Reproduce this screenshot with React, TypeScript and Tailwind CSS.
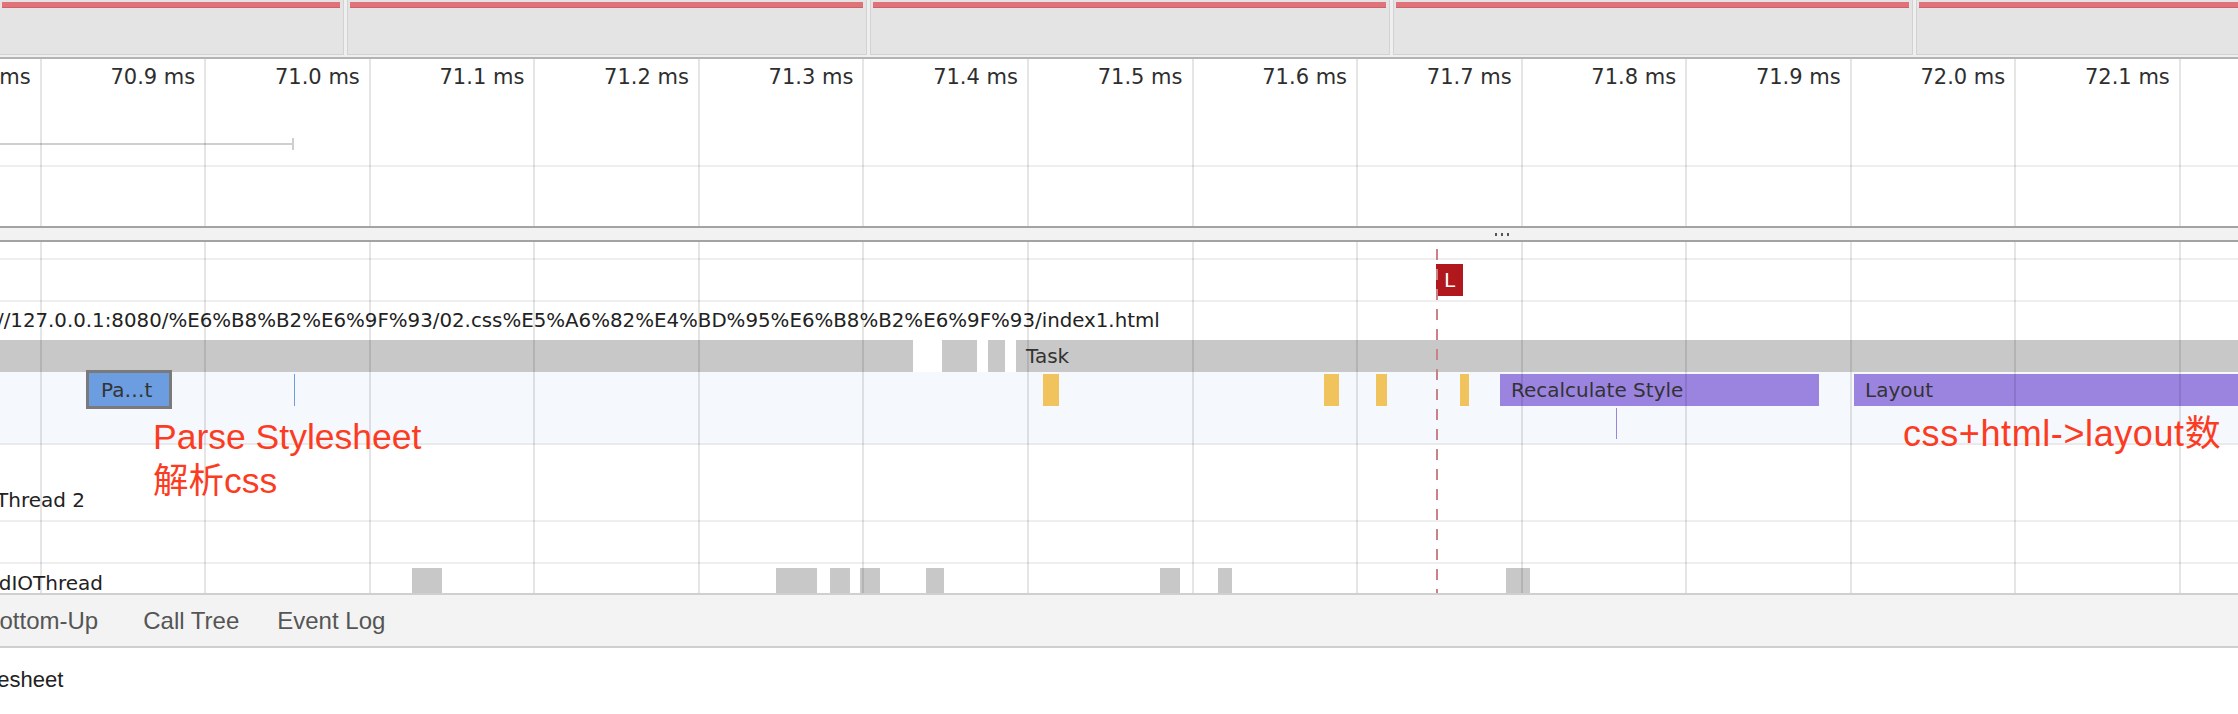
import React from "react";

const CELL_COUNT = 15;
const labels = [
  "70.8 ms", "70.9 ms", "71.0 ms", "71.1 ms", "71.2 ms", "71.3 ms", "71.4 ms", "71.5 ms",
  "71.6 ms", "71.7 ms", "71.8 ms", "71.9 ms", "72.0 ms", "72.1 ms", "72.2 ms",
];

function GridOverlay() {
  return (
    <div className="absolute top-0 bottom-0 left-[-122.85px] flex pointer-events-none">
      {Array.from({ length: CELL_COUNT }).map((_, i) => (
        <div key={i} className="w-[164.55px] shrink-0 h-full border-r-2 border-black/10" />
      ))}
    </div>
  );
}

function Segment({ w, first }: { w: string; first?: boolean }) {
  return (
    <div
      className={`${w} shrink-0 h-[55px] bg-[#e4e4e4] border-b border-r border-[#d2d2d2] ${
        first ? "" : "border-l"
      } pt-[2px] pl-[2px] pr-[3px]`}
    >
      <div className="h-[6px] bg-[#df7379] border-b border-[#d06168]" />
    </div>
  );
}

const ioBlocks = [
  [412, 442], [776, 817], [830, 850], [860, 880], [926, 944], [1160, 1180], [1218, 1232], [1506, 1530],
];
const yellow = [
  [1043, 1059], [1324, 1339], [1376, 1387], [1460, 1469],
];

export default function App() {
  return (
    <div className="relative w-[2238px] h-[714px] overflow-hidden bg-white font-['DejaVu_Sans',sans-serif] text-[#2a2a2a]">
      {/* Overview */}
      <div className="h-[57px] flex gap-[3px] bg-[#efefef] overflow-hidden">
        <Segment w="w-[344px]" first />
        <Segment w="w-[520px]" />
        <Segment w="w-[520px]" />
        <Segment w="w-[520px]" />
        <Segment w="w-[400px]" />
      </div>
      <div className="h-[2px] bg-[#b3b3b3]" />

      {/* Top timeline area */}
      <div className="relative h-[167px] overflow-hidden">
        <GridOverlay />
        <div className="relative h-[36px] flex ml-[-122.85px]">
          {labels.map((l) => (
            <div
              key={l}
              className="w-[164.55px] shrink-0 flex items-center justify-end pr-[11px] text-[21px] leading-[24px] text-[#2e2e2e] whitespace-nowrap"
            >
              {l}
            </div>
          ))}
        </div>
        <div className="h-[70px] pt-[43px]">
          <div className="flex items-center h-[12px]">
            <div className="w-[292px] h-[2px] bg-[#cfcfcf]" />
            <div className="w-[2px] h-[12px] bg-[#cfcfcf]" />
          </div>
        </div>
        <div className="h-[2px] bg-[#eeeeee]" />
      </div>

      {/* Splitter */}
      <div className="h-[16px] border-y-2 border-[#a3a3a3] bg-[#f2f2f2] flex items-center">
        <div className="ml-[1495px] flex gap-[4px]">
          <div className="w-[2px] h-[3px] bg-[#555]" />
          <div className="w-[2px] h-[3px] bg-[#555]" />
          <div className="w-[2px] h-[3px] bg-[#555]" />
        </div>
      </div>

      {/* Lower timeline area */}
      <div className="relative h-[351px] overflow-hidden">
        <div className="flex flex-col">
          <div className="h-[16px]" />
          <div className="h-[2px] bg-[#eeeeee]" />
          {/* L marker row */}
          <div className="relative h-[40px]">
            <div className="absolute left-[1436px] top-[4px] w-[27px] h-[32px] bg-[#b0181e] flex items-center justify-center text-white text-[20px]">
              L
            </div>
          </div>
          <div className="h-[2px] bg-[#eeeeee]" />
          {/* URL row */}
          <div className="h-[38px] flex items-center">
            <span className="ml-[-3px] text-[19.8px] leading-[24px] text-[#222] whitespace-nowrap">
              //127.0.0.1:8080/%E6%B8%B2%E6%9F%93/02.css%E5%A6%82%E4%BD%95%E6%B8%B2%E6%9F%93/index1.html
            </span>
          </div>
          {/* Task row */}
          <div className="relative h-[32px]">
            <div className="absolute left-0 top-0 h-full w-[913px] bg-[#c8c8c8]" />
            <div className="absolute left-[942px] top-0 h-full w-[35px] bg-[#c8c8c8]" />
            <div className="absolute left-[988px] top-0 h-full w-[17px] bg-[#c8c8c8]" />
            <div className="absolute left-[1016px] right-0 top-0 h-full bg-[#c8c8c8] flex items-center pl-[10px] text-[20px] text-[#333]">
              Task
            </div>
          </div>
          {/* Main thread events */}
          <div className="relative h-[71px] bg-[#f5f8fd]">
            <div className="absolute left-[86px] top-[-2px] w-[86px] h-[39px] border-[3px] border-[#7a7a7a] bg-[#6b9de0] flex items-center pl-[12px] text-[20px] text-[#333]">
              Pa…t
            </div>
            <div className="absolute left-[294px] top-[2px] w-[1px] h-[32px] bg-[#6b9de0]" />
            {yellow.map(([a, b]) => (
              <div
                key={a}
                className="absolute top-[2px] h-[32px] bg-[#f0c35c]"
                style={{ left: a, width: b - a }}
              />
            ))}
            <div className="absolute left-[1500px] top-[2px] w-[319px] h-[32px] bg-[#9b83e0] flex items-center pl-[11px] text-[20px] text-[#333] whitespace-nowrap">
              Recalculate Style
            </div>
            <div className="absolute left-[1854px] right-0 top-[2px] h-[32px] bg-[#9b83e0] flex items-center pl-[11px] text-[20px] text-[#333]">
              Layout
            </div>
            <div className="absolute left-[1616px] top-[36px] w-[1px] h-[31px] bg-[#9b83e0]" />
          </div>
          <div className="h-[2px] bg-[#eaeaea]" />
          {/* Thread 2 */}
          <div className="h-[75px] pt-[43px]">
            <div className="ml-[-4px] text-[20px] leading-[24px] text-[#222] whitespace-nowrap">Thread 2</div>
          </div>
          <div className="h-[2px] bg-[#eeeeee]" />
          <div className="h-[40px]" />
          <div className="h-[2px] bg-[#eeeeee]" />
          {/* IO thread */}
          <div className="relative h-[29px] overflow-hidden">
            <div className="pt-[7px] ml-[-39px] text-[20px] leading-[24px] text-[#222] whitespace-nowrap">
              ChildIOThread
            </div>
            {ioBlocks.map(([a, b]) => (
              <div
                key={a}
                className="absolute top-[4px] bottom-0 bg-[#c8c8c8]"
                style={{ left: a, width: b - a }}
              />
            ))}
          </div>
        </div>
        <GridOverlay />
        {/* dashed marker line */}
        <svg className="absolute left-[1435px] top-[7px] pointer-events-none" width="4" height="344">
          <line x1="2" y1="0" x2="2" y2="344" stroke="#c98286" strokeWidth="2" strokeDasharray="11 9" />
        </svg>
      </div>

      {/* Tab bar */}
      <div className="h-[55px] border-y-2 border-[#cfcfcf] bg-[#f3f3f3] flex items-center overflow-hidden font-['Liberation_Sans',sans-serif] text-[24px] text-[#555] whitespace-nowrap">
        <span className="ml-[-16.5px]">Bottom-Up</span>
        <span className="ml-[45px]">Call Tree</span>
        <span className="ml-[38px]">Event Log</span>
      </div>

      {/* Bottom summary */}
      <div className="h-[66px] pt-[20px] overflow-hidden">
        <div className="ml-[-103px] font-['Liberation_Sans',sans-serif] text-[22px] leading-[24px] text-[#222] whitespace-nowrap">
          Parse Stylesheet
        </div>
      </div>

      {/* Annotations */}
      <div className="absolute left-[153px] top-[415px] font-['Liberation_Sans','Noto_Sans_CJK_SC',sans-serif] text-[35.5px] leading-[44px] text-[#fc3c22] whitespace-nowrap">
        <div>Parse Stylesheet</div>
        <div>解析css</div>
      </div>
      <div className="absolute left-[1903px] top-[412px] font-['Liberation_Sans','Noto_Sans_CJK_SC',sans-serif] text-[36px] tracking-[0.6px] leading-[44px] text-[#fc3c22] whitespace-nowrap">
        css+html-&gt;layout数
      </div>
    </div>
  );
}
